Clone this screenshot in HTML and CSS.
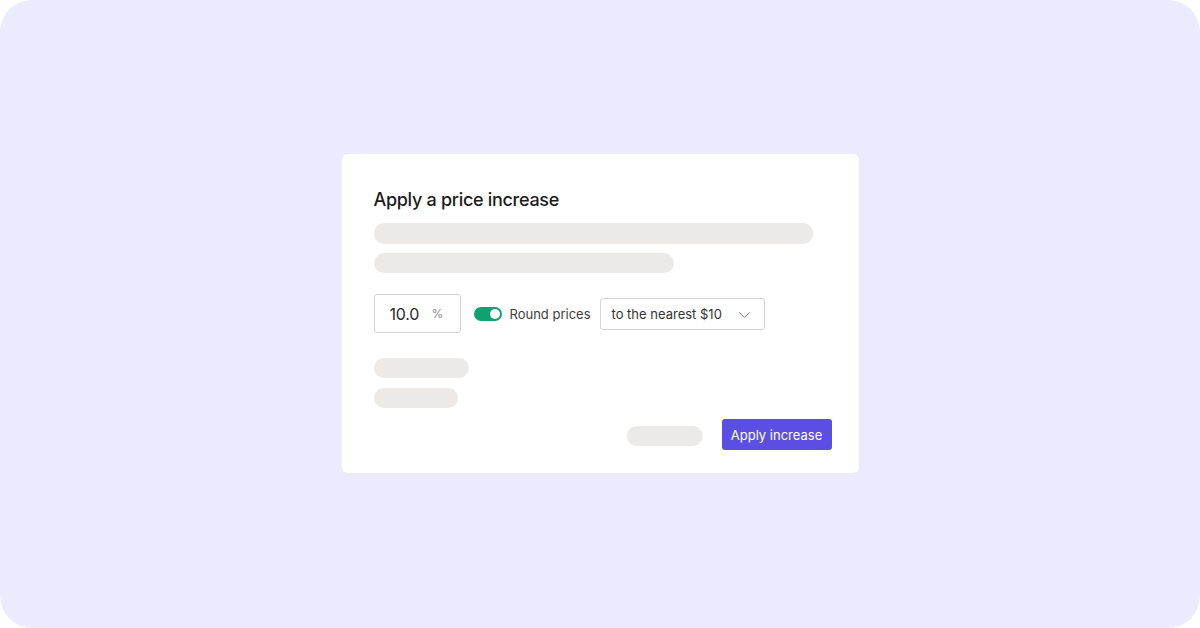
FILE: index.html
```html
<!DOCTYPE html>
<html lang="en">
<head>
<meta charset="utf-8">
<title>Apply a price increase</title>
<link rel="stylesheet" href="styles.css">
</head>
<body>
<div class="frame">
  <div class="card">
    <h1 class="title">Apply a price increase</h1>
    <div class="skel skel-lg"></div>
    <div class="skel skel-md"></div>
    <div class="controls">
      <div class="pct-input">
        <span class="pct-value">10.0</span>
        <span class="pct-sign">%</span>
      </div>
      <div class="toggle"><span class="knob"></span></div>
      <span class="toggle-label">Round prices</span>
      <div class="select">
        <span class="select-text">to the nearest $10</span>
        <svg class="chev" width="11" height="6" viewBox="0 0 11 6"><path d="M0.5 0.5l5 5 5-5" fill="none" stroke="#8a8a8a" stroke-width="1" stroke-linecap="round" stroke-linejoin="round"/></svg>
      </div>
    </div>
    <div class="skel skel-a"></div>
    <div class="skel skel-b"></div>
    <div class="footer">
      <div class="skel skel-btn"></div>
      <button class="btn-primary">Apply increase</button>
    </div>
  </div>
</div>
</body>
</html>
```
FILE: styles.css
```css
* { box-sizing: border-box; }
html, body { margin: 0; padding: 0; background: #ffffff; }
body { font-family: Inter, "Noto Sans", sans-serif; }
.frame {
  width: 1200px;
  height: 628px;
  border-radius: 32px;
  background: #ebebfd;
  display: flex;
  align-items: center;
  justify-content: center;
  padding-bottom: 1px;
}
.card {
  width: 517px;
  height: 319px;
  background: #ffffff;
  border-radius: 6px;
  padding: 34px 27px 23px 32px;
  display: flex;
  flex-direction: column;
}
.title {
  margin: 0;
  font-size: 18px;
  line-height: 24px;
  font-weight: 500;
  color: #1c1c1c;
  letter-spacing: -0.3px;
}
.skel {
  background: #ebeae8;
  border-radius: 10px;
  height: 20px;
}
.skel-lg { width: 439px; margin-top: 11px; height: 21px; }
.skel-md { width: 300px; margin-top: 9px; }
.controls {
  margin-top: 21px;
  display: flex;
  align-items: center;
  height: 39px;
}
.pct-input {
  width: 87px;
  height: 39px;
  border: 1px solid #d6d6d6;
  border-radius: 3px;
  display: flex;
  align-items: center;
  padding-left: 15px;
}
.pct-value {
  font-size: 16px;
  color: #2a2a2a;
  width: 42px;
  letter-spacing: -0.2px;
}
.pct-sign {
  font-size: 12px;
  color: #8a8a8a;
}
.toggle {
  margin-left: 13px;
  width: 28px;
  height: 14px;
  border-radius: 7px;
  background: #0ea271;
  display: flex;
  align-items: center;
  justify-content: flex-end;
  padding-right: 2px;
}
.knob {
  width: 10px;
  height: 10px;
  border-radius: 50%;
  background: #ffffff;
}
.toggle-label {
  margin-left: 8px;
  font-size: 13px;
  color: #3d3d3d;
}
.select {
  margin-left: 9px;
  width: 165px;
  height: 32px;
  border: 1px solid #d6d6d6;
  border-radius: 3px;
  display: flex;
  align-items: center;
  justify-content: space-between;
  padding: 0 14px 0 11px;
}
.select-text {
  font-size: 13px;
  color: #333333;
}
.chev { display: block; margin-top: 2px; }
.skel-a { width: 95px; margin-top: 25px; }
.skel-b { width: 84px; margin-top: 10px; }
.footer {
  margin-top: 11px;
  display: flex;
  justify-content: flex-end;
  align-items: center;
  gap: 19px;
}
.skel-btn { width: 76px; height: 20px; margin-top: 3px; }
.btn-primary {
  width: 110px;
  height: 31px;
  border: none;
  border-radius: 3px;
  background: #5b4fe3;
  color: #ffffff;
  font-family: Inter, "Noto Sans", sans-serif;
  font-size: 13px;
  padding: 0;
}
```
